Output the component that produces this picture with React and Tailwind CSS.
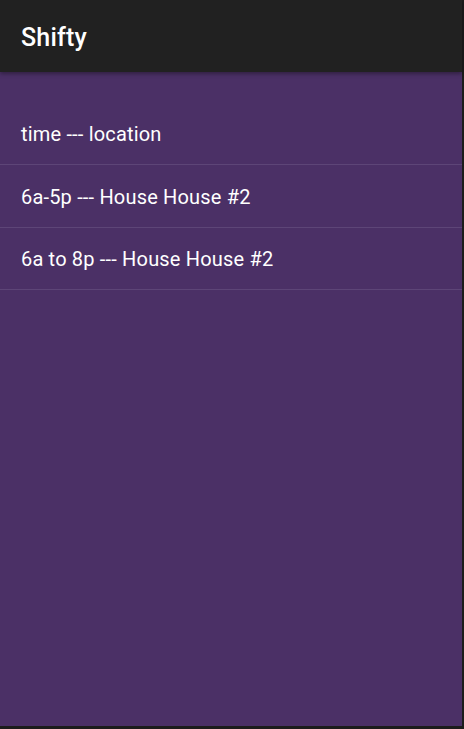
import React from 'react';

const rows = ['time --- location', '6a-5p --- House House #2', '6a to 8p --- House House #2'];

export default function App() {
  return (
    <div className="flex h-[729px] w-[464px] flex-col bg-[#1c1c1c] font-['Roboto',sans-serif] antialiased">
      <div className="flex flex-1 flex-col pr-[2px] pb-[3px]">
        <header className="relative z-10 flex h-[72px] shrink-0 items-center bg-[#212121] px-[21px] pt-[4px] shadow-[0_2px_4px_rgba(0,0,0,0.35)]">
          <h1 className="text-[25px] font-medium tracking-[0.2px] text-white">Shifty</h1>
        </header>
        <main className="flex-1 bg-[#4b3066] pt-[30px]">
          <ul>
            {rows.map((r, i) => (
              <li
                key={r}
                className={`flex items-center border-b border-[#5d4577] px-[21px] pt-[1px] text-[20px] tracking-[0.18px] text-white ${i === 2 ? 'h-[62px]' : 'h-[63px]'}`}
              >
                {r}
              </li>
            ))}
          </ul>
        </main>
      </div>
    </div>
  );
}
